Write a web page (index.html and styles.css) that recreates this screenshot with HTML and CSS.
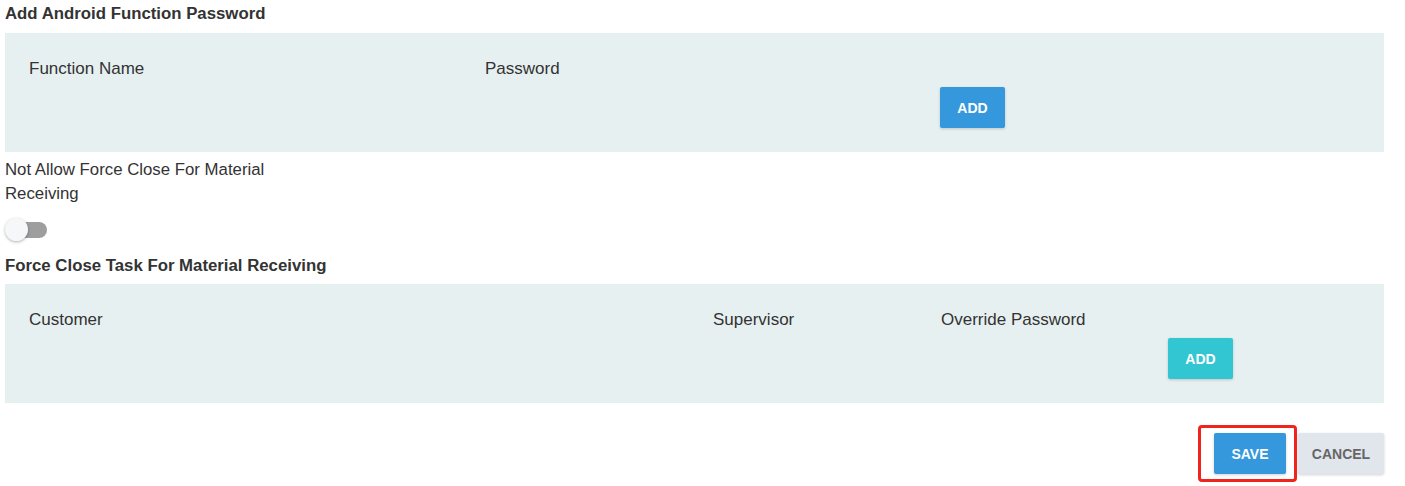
FILE: index.html
```html
<!DOCTYPE html>
<html lang="en">
<head>
    <meta charset="UTF-8">
    <meta name="viewport" content="width=device-width, initial-scale=1.0">
    <title>Function Password</title>
    <link rel="stylesheet" href="styles.css">
</head>
<body>
    <div class="page">
        <h3 class="section-title">Add Android Function Password</h3>

        <div class="panel">
            <div class="row row-function">
                <div class="col">
                    <label class="col-label">Function Name</label>
                </div>
                <div class="col">
                    <label class="col-label">Password</label>
                </div>
                <div class="col">
                    <label class="col-label">&nbsp;</label>
                    <div class="controls">
                        <button class="btn btn-blue">ADD</button>
                    </div>
                </div>
            </div>
        </div>

        <div class="switch-field">
            <p class="switch-label">Not Allow Force Close For Material Receiving</p>
            <span class="switch">
                <span class="switch-track"></span>
                <span class="switch-knob"></span>
            </span>
        </div>

        <h3 class="section-title title-second">Force Close Task For Material Receiving</h3>

        <div class="panel">
            <div class="row row-force">
                <div class="col">
                    <label class="col-label">Customer</label>
                </div>
                <div class="col">
                    <label class="col-label">Supervisor</label>
                </div>
                <div class="col">
                    <label class="col-label">Override Password</label>
                </div>
                <div class="col">
                    <label class="col-label">&nbsp;</label>
                    <div class="controls">
                        <button class="btn btn-teal">ADD</button>
                    </div>
                </div>
            </div>
        </div>

        <div class="actions">
            <span class="highlight">
                <button class="btn btn-blue btn-save">SAVE</button>
            </span>
            <button class="btn btn-default">CANCEL</button>
        </div>
    </div>
</body>
</html>
```

FILE: styles.css
```css
body {
    margin: 0;
    background: #fff;
    font-family: "Liberation Sans", Arial, sans-serif;
    color: #333;
}
.page {
    width: 1379px;
    padding: 4px 0 20px 5px;
}
.section-title {
    margin: 0 0 9px;
    font-size: 16.8px;
    line-height: 20px;
    font-weight: bold;
}
.title-second {
    margin-top: 1px;
    margin-bottom: 8px;
}
.panel {
    background: #e7f0f1;
    padding: 27px 24px 24px;
    height: 68px;
}
.row {
    display: grid;
}
.row-function {
    grid-template-columns: 456px 455px 1fr;
}
.row-force {
    grid-template-columns: 684px 228px 227px 1fr;
}
.col-label {
    display: block;
    font-size: 17px;
    line-height: 18px;
    height: 18px;
}
.controls {
    margin-top: 9px;
}
.btn {
    height: 41px;
    border: none;
    border-radius: 2px;
    font-family: "Liberation Sans", Arial, sans-serif;
    font-size: 14px;
    font-weight: bold;
    color: #fff;
    padding: 0;
    box-shadow: 0 1px 3px rgba(0, 0, 0, 0.18);
}
.btn-blue {
    background: #3598dc;
    width: 65px;
}
.btn-teal {
    background: #32c5d2;
    width: 65px;
}
.btn-save {
    width: 72px;
}
.btn-default {
    background: #e1e5ec;
    color: #666;
    width: 86px;
    margin-left: 12px;
}
.switch-field {
    margin-top: 6px;
    height: 97px;
}
.switch-label {
    margin: 0;
    width: 290px;
    font-size: 16.8px;
    line-height: 24px;
}
.switch {
    display: block;
    position: relative;
    width: 44px;
    height: 26px;
    margin-top: 11px;
}
.switch-track {
    position: absolute;
    left: 8px;
    top: 5px;
    width: 34px;
    height: 16px;
    border-radius: 8px;
    background: #9e9e9e;
}
.switch-knob {
    position: absolute;
    left: 0;
    top: 1px;
    width: 23px;
    height: 23px;
    border-radius: 50%;
    background: #f5f7f8;
    box-shadow: 0 1px 3px rgba(0, 0, 0, 0.3);
}
.actions {
    display: flex;
    justify-content: flex-end;
    align-items: center;
    margin-top: 30px;
}
.highlight {
    display: inline-flex;
    position: relative;
}
.highlight::after {
    content: "";
    position: absolute;
    left: -16px;
    right: -11px;
    top: -8px;
    bottom: -8px;
    border: 3px solid #f0241d;
    border-radius: 4px;
}
```
